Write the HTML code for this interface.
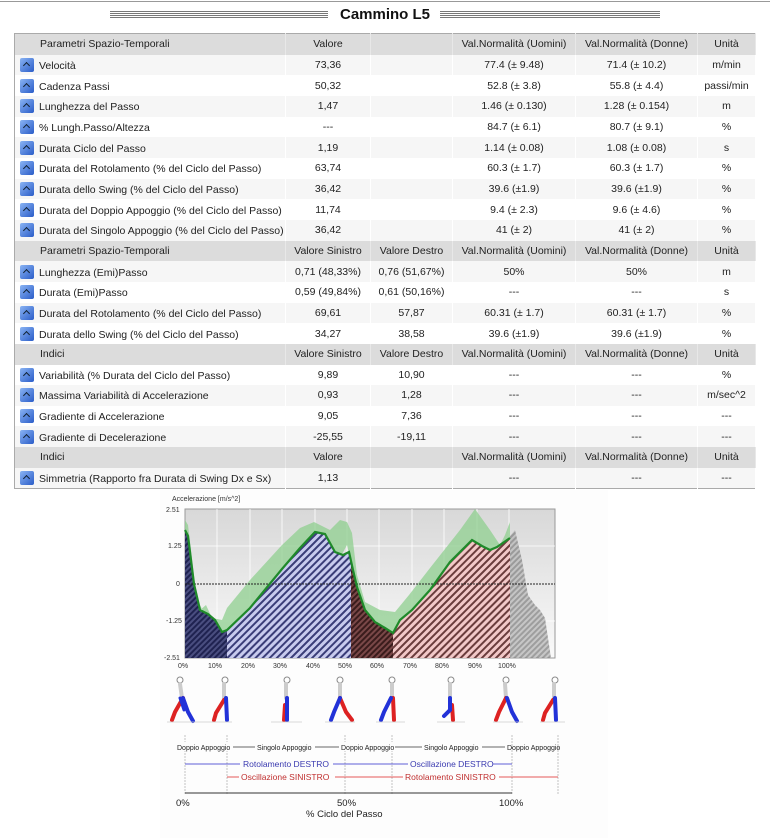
<!DOCTYPE html>
<html><head><meta charset="utf-8"><style>
body{margin:0;width:770px;height:838px;background:#fff;position:relative;overflow:hidden;font-family:"Liberation Sans",sans-serif;}
.topline{position:absolute;left:0;top:1px;width:770px;height:1px;background:#999;}
.title{position:absolute;top:6px;left:0;width:770px;text-align:center;font:bold 15px "Liberation Sans",sans-serif;color:#111;}
.hl{position:absolute;top:11px;height:8px;background:repeating-linear-gradient(#777 0 1px,#fff 1px 2px);}
table{position:absolute;left:14px;top:33px;width:741px;border-collapse:collapse;table-layout:fixed;font-size:10.5px;color:#222;border:1px solid #aaa;}
td{height:20.67px;padding:0;text-align:center;white-space:nowrap;overflow:hidden;border-right:1px solid #fff;}
tr{background:#fff}
tr:nth-child(even){background:#f6f6f6}
tr.h{background:#dcdcdc}
tr.h td{border-right:1px solid #e8e8e8}
td.n{text-align:left;padding-left:5px;}
tr.h td.n{padding-left:25px}
.ic{display:inline-block;width:14px;height:14px;border-radius:2px;background:linear-gradient(135deg,#8ab4f4,#2a5cc8);vertical-align:-3px;margin-right:5px;position:relative}
.ic:after{content:"";position:absolute;left:4px;top:5px;width:4px;height:4px;border-left:1.5px solid #123;border-top:1.5px solid #123;transform:rotate(45deg)}
</style></head><body>
<div class="topline"></div>
<div class="hl" style="left:110px;width:218px"></div>
<div class="hl" style="left:440px;width:220px"></div>
<div class="title">Cammino L5</div>
<table>
<colgroup><col style="width:271px"><col style="width:85px"><col style="width:82px"><col style="width:123px"><col style="width:122px"><col style="width:58px"></colgroup>
<tr class="h"><td class="n">Parametri Spazio-Temporali</td><td>Valore</td><td></td><td>Val.Normalità (Uomini)</td><td>Val.Normalità (Donne)</td><td>Unità</td></tr>
<tr><td class="n"><span class="ic"></span>Velocità</td><td>73,36</td><td></td><td>77.4 (± 9.48)</td><td>71.4 (± 10.2)</td><td>m/min</td></tr>
<tr><td class="n"><span class="ic"></span>Cadenza Passi</td><td>50,32</td><td></td><td>52.8 (± 3.8)</td><td>55.8 (± 4.4)</td><td>passi/min</td></tr>
<tr><td class="n"><span class="ic"></span>Lunghezza del Passo</td><td>1,47</td><td></td><td>1.46 (± 0.130)</td><td>1.28 (± 0.154)</td><td>m</td></tr>
<tr><td class="n"><span class="ic"></span>% Lungh.Passo/Altezza</td><td>---</td><td></td><td>84.7 (± 6.1)</td><td>80.7 (± 9.1)</td><td>%</td></tr>
<tr><td class="n"><span class="ic"></span>Durata Ciclo del Passo</td><td>1,19</td><td></td><td>1.14 (± 0.08)</td><td>1.08 (± 0.08)</td><td>s</td></tr>
<tr><td class="n"><span class="ic"></span>Durata del Rotolamento (% del Ciclo del Passo)</td><td>63,74</td><td></td><td>60.3 (± 1.7)</td><td>60.3 (± 1.7)</td><td>%</td></tr>
<tr><td class="n"><span class="ic"></span>Durata dello Swing (% del Ciclo del Passo)</td><td>36,42</td><td></td><td>39.6 (±1.9)</td><td>39.6 (±1.9)</td><td>%</td></tr>
<tr><td class="n"><span class="ic"></span>Durata del Doppio Appoggio (% del Ciclo del Passo)</td><td>11,74</td><td></td><td>9.4 (± 2.3)</td><td>9.6 (± 4.6)</td><td>%</td></tr>
<tr><td class="n"><span class="ic"></span>Durata del Singolo Appoggio (% del Ciclo del Passo)</td><td>36,42</td><td></td><td>41 (± 2)</td><td>41 (± 2)</td><td>%</td></tr>
<tr class="h"><td class="n">Parametri Spazio-Temporali</td><td>Valore Sinistro</td><td>Valore Destro</td><td>Val.Normalità (Uomini)</td><td>Val.Normalità (Donne)</td><td>Unità</td></tr>
<tr><td class="n"><span class="ic"></span>Lunghezza (Emi)Passo</td><td>0,71 (48,33%)</td><td>0,76 (51,67%)</td><td>50%</td><td>50%</td><td>m</td></tr>
<tr><td class="n"><span class="ic"></span>Durata (Emi)Passo</td><td>0,59 (49,84%)</td><td>0,61 (50,16%)</td><td>---</td><td>---</td><td>s</td></tr>
<tr><td class="n"><span class="ic"></span>Durata del Rotolamento (% del Ciclo del Passo)</td><td>69,61</td><td>57,87</td><td>60.31 (± 1.7)</td><td>60.31 (± 1.7)</td><td>%</td></tr>
<tr><td class="n"><span class="ic"></span>Durata dello Swing (% del Ciclo del Passo)</td><td>34,27</td><td>38,58</td><td>39.6 (±1.9)</td><td>39.6 (±1.9)</td><td>%</td></tr>
<tr class="h"><td class="n">Indici</td><td>Valore Sinistro</td><td>Valore Destro</td><td>Val.Normalità (Uomini)</td><td>Val.Normalità (Donne)</td><td>Unità</td></tr>
<tr><td class="n"><span class="ic"></span>Variabilità (% Durata del Ciclo del Passo)</td><td>9,89</td><td>10,90</td><td>---</td><td>---</td><td>%</td></tr>
<tr><td class="n"><span class="ic"></span>Massima Variabilità di Accelerazione</td><td>0,93</td><td>1,28</td><td>---</td><td>---</td><td>m/sec^2</td></tr>
<tr><td class="n"><span class="ic"></span>Gradiente di Accelerazione</td><td>9,05</td><td>7,36</td><td>---</td><td>---</td><td>---</td></tr>
<tr><td class="n"><span class="ic"></span>Gradiente di Decelerazione</td><td>-25,55</td><td>-19,11</td><td>---</td><td>---</td><td>---</td></tr>
<tr class="h"><td class="n">Indici</td><td>Valore</td><td></td><td>Val.Normalità (Uomini)</td><td>Val.Normalità (Donne)</td><td>Unità</td></tr>
<tr><td class="n"><span class="ic"></span>Simmetria (Rapporto fra Durata di Swing Dx e Sx)</td><td>1,13</td><td></td><td>---</td><td>---</td><td>---</td></tr>
</table>

<svg style="position:absolute;left:0;top:0" width="770" height="838" font-family="Liberation Sans, sans-serif">
<defs>
<linearGradient id="bg" x1="0" y1="0" x2="0" y2="1"><stop offset="0" stop-color="#d8d8d8"/><stop offset="1" stop-color="#fafafa"/></linearGradient>
<pattern id="pb" width="5" height="5" patternUnits="userSpaceOnUse" patternTransform="rotate(45)"><rect width="5" height="5" fill="#c8cbee"/><rect width="2" height="5" fill="#3a3d78"/></pattern>
<pattern id="pdb" width="4" height="4" patternUnits="userSpaceOnUse" patternTransform="rotate(45)"><rect width="4" height="4" fill="#4a4e80"/><rect width="2" height="4" fill="#1f2250"/></pattern>
<pattern id="pr" width="5" height="5" patternUnits="userSpaceOnUse" patternTransform="rotate(45)"><rect width="5" height="5" fill="#f2c8c8"/><rect width="2" height="5" fill="#6a3c3c"/></pattern>
<pattern id="pdr" width="4" height="4" patternUnits="userSpaceOnUse" patternTransform="rotate(45)"><rect width="4" height="4" fill="#7a4848"/><rect width="2" height="4" fill="#3a1c1c"/></pattern>
<pattern id="pg" width="4" height="4" patternUnits="userSpaceOnUse" patternTransform="rotate(45)"><rect width="4" height="4" fill="#bbb"/><rect width="2" height="4" fill="#888"/></pattern>
<clipPath id="c1"><rect x="185" y="509" width="42" height="150"/></clipPath>
<clipPath id="c2"><rect x="227" y="509" width="124" height="150"/></clipPath>
<clipPath id="c3"><rect x="351" y="509" width="42" height="150"/></clipPath>
<clipPath id="c4"><rect x="393" y="509" width="117" height="150"/></clipPath>
<path id="area" d="M185,530 L188,536 L194,584 L200,610 L208,614 L215,620 L222,632 L227,630 L250,608 L282,569 L300,548 L315,532 L325,534 L335,552 L343,555 L349,552 L353,570 L357,587 L365,610 L375,622 L385,628 L393,633 L400,620 L412,610 L430,590 L450,562 L465,547 L472,540 L482,546 L490,550 L497,547 L510,538 L510,658 L185,658 Z"/>
</defs>
<rect x="160" y="490" width="448" height="348" fill="#fdfdfd"/>
<text x="172" y="501" font-size="7" fill="#333">Accelerazione [m/s^2]</text>
<rect x="185" y="509" width="370" height="149" fill="url(#bg)" stroke="#999"/>
<g stroke="#fff" stroke-width="0.8">
<line x1="217" y1="509" x2="217" y2="658"/><line x1="250" y1="509" x2="250" y2="658"/><line x1="282" y1="509" x2="282" y2="658"/><line x1="315" y1="509" x2="315" y2="658"/><line x1="347" y1="509" x2="347" y2="658"/><line x1="379" y1="509" x2="379" y2="658"/><line x1="412" y1="509" x2="412" y2="658"/><line x1="444" y1="509" x2="444" y2="658"/><line x1="477" y1="509" x2="477" y2="658"/><line x1="509" y1="509" x2="509" y2="658"/>
<line x1="185" y1="546" x2="555" y2="546"/><line x1="185" y1="621" x2="555" y2="621"/>
</g>
<path d="M185,520 L188,525 L195,584 L200,610 L206,605 L212,618 L222,620 L227,608 L250,580 L282,545 L300,528 L314,522 L330,530 L340,520 L347,522 L352,533 L357,575 L365,602 L380,610 L395,612 L409,595 L430,568 L460,530 L475,509 L490,530 L500,545 L505,535 L510,522 L510,640 L497,565 L470,560 L445,580 L412,612 L398,640 L390,632 L372,618 L360,606 L352,568 L347,545 L340,558 L330,555 L312,548 L297,555 L282,568 L250,610 L227,640 L215,630 L205,615 L195,595 L188,560 L185,545 Z" fill="#8fcf8f" opacity="0.75"/>
<use href="#area" fill="url(#pdb)" clip-path="url(#c1)"/>
<use href="#area" fill="url(#pb)" clip-path="url(#c2)"/>
<use href="#area" fill="url(#pdr)" clip-path="url(#c3)"/>
<use href="#area" fill="url(#pr)" clip-path="url(#c4)"/>
<path d="M510,536 L515,530 L522,560 L528,595 L535,605 L540,610 L545,618 L551,658 L510,658 Z" fill="url(#pg)" opacity="0.8"/>
<line x1="185" y1="584" x2="555" y2="584" stroke="#222" stroke-dasharray="2,1"/>
<path d="M185,530 L188,536 L194,584 L200,610 L208,614 L215,620 L222,632 L227,630 L250,608 L282,569 L300,548 L315,532 L325,534 L335,552 L343,555 L349,552 L353,570 L357,587 L365,610 L375,622 L385,628 L393,633 L400,620 L412,610 L430,590 L450,562 L465,547 L472,540 L482,546 L490,550 L497,547 L510,538" fill="none" stroke="#1f8a2a" stroke-width="2.2"/>
<g font-size="7" fill="#333">
<text x="166" y="512">2.51</text><text x="168" y="548">1.25</text><text x="176" y="586">0</text><text x="166" y="623">-1.25</text><text x="164" y="660">-2.51</text>
<text x="178" y="668">0%</text><text x="208" y="668">10%</text><text x="241" y="668">20%</text><text x="273" y="668">30%</text><text x="306" y="668">40%</text><text x="338" y="668">50%</text><text x="370" y="668">60%</text><text x="403" y="668">70%</text><text x="435" y="668">80%</text><text x="468" y="668">90%</text><text x="498" y="668">100%</text>
</g>
<g stroke-linecap="round">
<g transform="translate(185,0)"><circle cx="-5" cy="680" r="3" fill="#fff" stroke="#888"/><line x1="-5" y1="684" x2="-3" y2="698" stroke="#ccc" stroke-width="4"/><path d="M-2,698 L-10,712 L-13,720" stroke="#d22" stroke-width="4" fill="none"/><path d="M-2,698 L3,712 L8,721" stroke="#2232d8" stroke-width="4" fill="none"/><line x1="-5" y1="698" x2="-1" y2="710" stroke="#2232d8" stroke-width="3"/></g>
<g transform="translate(227,0)"><circle cx="-2" cy="680" r="3" fill="#fff" stroke="#888"/><line x1="-3" y1="684" x2="-3" y2="698" stroke="#ccc" stroke-width="4"/><path d="M-3,700 L-11,713 L-13,720" stroke="#d22" stroke-width="4" fill="none"/><path d="M-1,698 L0,720" stroke="#2232d8" stroke-width="4" fill="none"/></g>
<g transform="translate(287,0)"><circle cx="0" cy="680" r="3" fill="#fff" stroke="#888"/><line x1="-1" y1="684" x2="-1" y2="698" stroke="#ccc" stroke-width="4"/><path d="M-2,705 L-3,720" stroke="#d22" stroke-width="4" fill="none"/><path d="M0,698 L0,720" stroke="#2232d8" stroke-width="4" fill="none"/></g>
<g transform="translate(340,0)"><circle cx="0" cy="680" r="3" fill="#fff" stroke="#888"/><line x1="0" y1="684" x2="0" y2="698" stroke="#ccc" stroke-width="4"/><path d="M0,698 L6,712 L12,720" stroke="#d22" stroke-width="4" fill="none"/><path d="M0,698 L-6,712 L-9,720" stroke="#2232d8" stroke-width="4" fill="none"/></g>
<g transform="translate(392,0)"><circle cx="0" cy="680" r="3" fill="#fff" stroke="#888"/><line x1="0" y1="684" x2="0" y2="698" stroke="#ccc" stroke-width="4"/><path d="M1,698 L2,720" stroke="#d22" stroke-width="4" fill="none"/><path d="M-1,698 L-8,712 L-11,720" stroke="#2232d8" stroke-width="4" fill="none"/></g>
<g transform="translate(451,0)"><circle cx="0" cy="680" r="3" fill="#fff" stroke="#888"/><line x1="-1" y1="684" x2="-1" y2="698" stroke="#ccc" stroke-width="4"/><path d="M1,705 L2,720" stroke="#d22" stroke-width="4" fill="none"/><path d="M-1,698 L-1,710 L-7,716" stroke="#2232d8" stroke-width="4" fill="none"/></g>
<g transform="translate(508,0)"><circle cx="-2" cy="680" r="3" fill="#fff" stroke="#888"/><line x1="-3" y1="684" x2="-2" y2="698" stroke="#ccc" stroke-width="4"/><path d="M-2,698 L-9,712 L-12,720" stroke="#d22" stroke-width="4" fill="none"/><path d="M-1,698 L4,712 L9,721" stroke="#2232d8" stroke-width="4" fill="none"/></g>
<g transform="translate(555,0)"><circle cx="0" cy="680" r="3" fill="#fff" stroke="#888"/><line x1="-1" y1="684" x2="-1" y2="698" stroke="#ccc" stroke-width="4"/><path d="M-2,700 L-10,713 L-12,720" stroke="#d22" stroke-width="4" fill="none"/><path d="M0,698 L1,720" stroke="#2232d8" stroke-width="4" fill="none"/></g>
</g>
<g stroke="#ccc" stroke-width="0.8"><line x1="167" y1="722" x2="232" y2="722"/><line x1="271" y1="722" x2="302" y2="722"/><line x1="325" y1="722" x2="355" y2="722"/><line x1="376" y1="722" x2="405" y2="722"/><line x1="437" y1="722" x2="465" y2="722"/><line x1="493" y1="722" x2="523" y2="722"/><line x1="540" y1="722" x2="565" y2="722"/></g>
<g stroke="#aaa" stroke-width="0.7" stroke-dasharray="2,1"><line x1="185" y1="735" x2="185" y2="795"/><line x1="227" y1="735" x2="227" y2="795"/><line x1="345" y1="735" x2="345" y2="795"/><line x1="392" y1="735" x2="392" y2="795"/><line x1="512" y1="735" x2="512" y2="795"/><line x1="558" y1="735" x2="558" y2="795"/></g>
<g font-size="7" fill="#222">
<line x1="228" y1="747" x2="505" y2="747" stroke="#333" stroke-width="0.7"/>
<rect x="175" y="742" width="58" height="9" fill="#fdfdfd"/><rect x="255" y="742" width="60" height="9" fill="#fdfdfd"/><rect x="339" y="742" width="56" height="9" fill="#fdfdfd"/><rect x="422" y="742" width="60" height="9" fill="#fdfdfd"/>
<text x="177" y="750">Doppio Appoggio</text><text x="257" y="750">Singolo Appoggio</text><text x="341" y="750">Doppio Appoggio</text><text x="424" y="750">Singolo Appoggio</text><text x="507" y="750">Doppio Appoggio</text>
</g>
<g font-size="8.5">
<line x1="185" y1="764" x2="512" y2="764" stroke="#2a2ac8" stroke-width="0.8"/>
<rect x="240" y="758" width="93" height="11" fill="#fdfdfd"/><rect x="408" y="758" width="85" height="11" fill="#fdfdfd"/>
<text x="243" y="767" fill="#3a3ab0">Rotolamento DESTRO</text><text x="410" y="767" fill="#3a3ab0">Oscillazione DESTRO</text>
<line x1="227" y1="777" x2="558" y2="777" stroke="#d22" stroke-width="0.8"/>
<rect x="239" y="771" width="96" height="11" fill="#fdfdfd"/><rect x="403" y="771" width="96" height="11" fill="#fdfdfd"/>
<text x="241" y="780" fill="#c03030">Oscillazione SINISTRO</text><text x="405" y="780" fill="#c03030">Rotolamento SINISTRO</text>
</g>
<line x1="185" y1="793" x2="512" y2="793" stroke="#333" stroke-width="1"/>
<g font-size="9.5" fill="#222"><text x="176" y="806">0%</text><text x="337" y="806">50%</text><text x="499" y="806">100%</text><text x="306" y="817">% Ciclo del Passo</text></g>
</svg>
</body></html>
